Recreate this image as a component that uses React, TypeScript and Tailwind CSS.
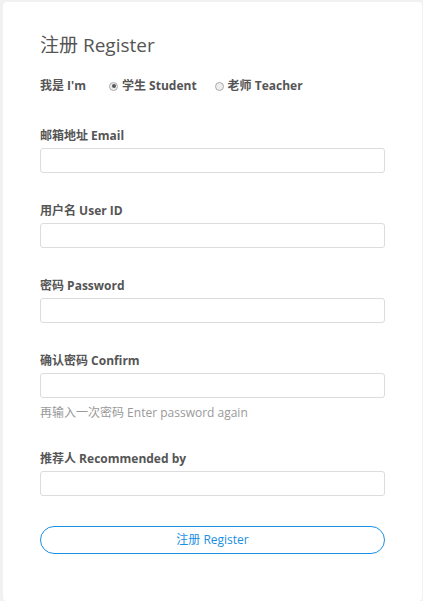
import React from 'react';

const font = { fontFamily: '"Open Sans", "Noto Sans CJK SC", sans-serif' };

const Field: React.FC<{ label: string; help?: string; type?: string }> = ({ label, help, type = 'text' }) => (
  <div className="flex flex-col">
    <label className="text-[12px] leading-[16px] font-bold text-[#555]">{label}</label>
    <input
      type={type}
      className="mt-[4px] h-[25px] w-full rounded-[3px] border border-[#dcdcdc] bg-white px-2 text-[12px] outline-none"
    />
    {help && <p className="mt-[7px] text-[12px] leading-[16px] text-[#999]">{help}</p>}
  </div>
);

const Radio: React.FC<{ checked?: boolean; label: string }> = ({ checked, label }) => (
  <label className="flex items-center gap-[4px] cursor-pointer">
    <span className="flex h-[9px] w-[9px] items-center justify-center rounded-full border border-[#aaa] bg-[#eee]">
      {checked && <span className="h-[4px] w-[4px] rounded-full bg-[#555]" />}
    </span>
    <span className="text-[12px] font-bold text-[#555]">{label}</span>
  </label>
);

export default function App() {
  return (
    <div className="min-h-[601px] bg-[#f1f1f1] pt-[2px] pl-[3px] pr-[1px]" style={font}>
      <div className="min-h-[599px] rounded-[4px] bg-white px-[37px] pt-[29px]">
        <h1 className="text-[19px] leading-[28px] text-[#555]">注册 Register</h1>

        <div className="mt-[19px] flex items-center text-[12px] leading-[16px]">
          <span className="w-[69px] font-bold text-[#555]">我是 I'm</span>
          <div className="flex items-center gap-[18px]">
            <Radio checked label="学生 Student" />
            <Radio label="老师 Teacher" />
          </div>
        </div>

        <div className="mt-[34px] flex flex-col gap-[30px]">
          <Field label="邮箱地址 Email" type="email" />
          <Field label="用户名 User ID" />
          <Field label="密码 Password" type="password" />
          <Field label="确认密码 Confirm" type="password" help="再输入一次密码 Enter password again" />
          <Field label="推荐人 Recommended by" />
        </div>

        <button className="mt-[30px] h-[28px] w-full rounded-full border border-[#1a8fe3] bg-white text-[12px] text-[#1a8fe3]">
          注册 Register
        </button>
      </div>
    </div>
  );
}
